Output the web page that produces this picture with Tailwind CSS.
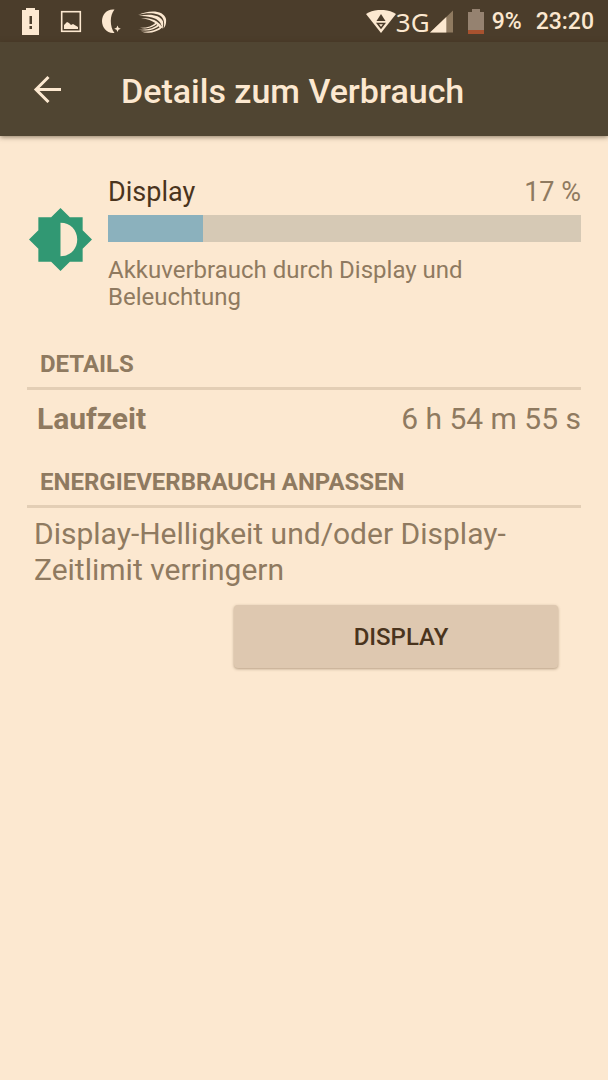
<!DOCTYPE html>
<html lang="de">
<head>
<meta charset="utf-8">
<meta name="viewport" content="width=device-width, initial-scale=1">
<title>Details zum Verbrauch</title>
<script src="https://cdn.jsdelivr.net/npm/@tailwindcss/browser@4"></script>
</head>
<body class="min-h-screen bg-[#fce8d0] font-[Roboto,sans-serif] text-[#8f7a60]">
<div class="flex h-[42px] items-center justify-between bg-[#4b3d2b] pl-5 pr-[14px] pt-px text-[#fce8d0]">
  <div class="flex items-center">
    <svg class="h-7 w-5" viewBox="0 0 20 28" fill="currentColor" aria-hidden="true"><path fill-rule="evenodd" d="M6 0h9v2h4v25H2V2h4zM9.500 8v8h2.500V8zM9.500 18v3h2.500v-3z"/></svg>
    <svg class="ml-5 h-6 w-[22px]" viewBox="0 0 22 24" aria-hidden="true"><rect x="1.7" y="1.700" width="18.6" height="19.600" fill="none" stroke="currentColor" stroke-width="1.6"/><path d="M4 19v-4l3-3 2 1 2 2 2-1 5 3v2z" fill="currentColor"/></svg>
    <svg class="ml-5 h-7 w-[19px]" viewBox="0 0 19 28" fill="currentColor" aria-hidden="true"><path d="M12.500 1.500C5 .5 0 6.500 0 13S5 26 12.500 25C10 22 8.800 17.500 8.800 13S10 4.500 12.500 1.500z"/><path d="M15.500 17.500l1 2.300 2.300 1-2.300 1-1 2.300-1-2.300-2.300-1 2.300-1z"/></svg>
    <svg class="ml-4 h-6 w-[30px]" viewBox="0 0 30 24" fill="currentColor" aria-hidden="true">
      <path d="M1 5C12-.500 27 0 29 9c.5 4-.500 7-2.500 9.500C28 12 27 7 21 4.500 15 2.500 8 3 1 5z"/>
      <path d="M2 6C13 3.500 23 5 26 11.500c.5 3 .2 5-.800 7.500C25 13 21 9 15 7.500 10 6 6 6 2 6z"/>
      <path d="M4 8c9-.500 17 2 21 9l-1.500 1.500C19 12 12 9 4 8z"/>
      <path d="M1 19.500c9 1 16-1 21-6l1.500 1.200C18 20 10 22 1 19.500z"/>
      <path d="M4 21.500c8 .8 15-.700 20.500-5.500l1 1.200C20 22.500 11 24 4 21.500z"/>
      <path d="M3 17.800c7 .3 12-1.500 16-5.300l1.500 1C16 17.500 10 19.500 3 17.800z"/>
    </svg>
  </div>
  <div class="flex items-center">
    <svg class="h-6 w-[30px]" viewBox="0 0 30 24" fill="currentColor" aria-hidden="true"><path d="M0 4C8-1.500 22-1.500 30 4L15 23z"/><path d="M10.500 11l4.500-7 4.500 7z" fill="#4a3b2a"/><path d="M11.500 13.500h7l-3.500 4.500z" fill="none" stroke="#4a3b2a" stroke-width="1.500"/></svg>
    <span class="font-['Noto_Sans',sans-serif] text-[26px] leading-7">3G</span>
    <svg class="h-6 w-[23px]" viewBox="0 0 24 24" aria-hidden="true"><path d="M24 0v23H0z" fill="#8f7a60"/><path d="M17 6.700V23H0z" fill="currentColor"/></svg>
    <svg class="ml-[14px] h-7 w-[18px]" viewBox="0 0 18 28" aria-hidden="true"><path d="M5 1h8v3h4v22H1V4h4z" fill="#958270"/><path d="M1 22h16v4H1z" fill="#a8522f"/></svg>
    <span class="ml-[7px] text-[23px] leading-7 font-medium">9%</span>
    <span class="ml-[14px] text-[23px] leading-7 font-medium">23:20</span>
  </div>
</div>
<header class="flex h-[94px] items-center bg-[#504532] pl-[33px] text-[#fce8d0] shadow-[0_1px_5px_rgba(60,45,25,0.6)]">
  <button type="button" aria-label="Zurück" class="flex size-7 items-center justify-center">
    <svg class="size-7" viewBox="0 0 28 28" fill="none" stroke="currentColor" stroke-width="3" aria-hidden="true"><path d="M28 14.500H3M15.500 2L3 14.500 15.500 27"/></svg>
  </button>
  <h1 class="ml-[60px] pt-1 text-[34px] leading-10 font-medium">Details zum Verbrauch</h1>
</header>
<main class="px-[27px] pt-10">
  <section class="flex items-start">
    <svg class="ml-[2px] mr-4 mt-8 size-[63px] shrink-0" viewBox="0 0 64 64" aria-hidden="true"><path fill="#319873" fill-rule="evenodd" d="M32 0l9.500 9.300h13v13.200L64 32l-9.500 9.500v13.200h-13L32 64l-9.500-9.300h-13V41.500L0 32l9.500-9.500V9.300h13zM32 15v34c10 0 17-7.500 17-17s-7-17-17-17z"/></svg>
    <div class="min-w-0 flex-1">
      <div class="flex justify-between text-[27px] leading-8"><h2 class="text-[#4a341d]">Display</h2><span>17 %</span></div>
      <div role="progressbar" aria-label="Display" aria-valuenow="17" aria-valuemin="0" aria-valuemax="100" class="mt-[7px] h-[27px] bg-[#d6c9b5]"><div class="h-full bg-[#8bb1bd]" style="width:20%"></div></div>
      <p class="mt-[15px] max-w-[400px] text-[24px] leading-[27px]">Akkuverbrauch durch Display und Beleuchtung</p>
    </div>
  </section>
  <section class="mt-[39px]">
    <h2 class="border-b-[3px] border-[#e3ceb5] pb-[9px] pl-[13px] text-[24px] leading-7 font-bold">DETAILS</h2>
    <dl class="mt-[11px] flex justify-between pl-[10px] text-[30px] leading-9"><dt class="font-bold">Laufzeit</dt><dd>6 h 54 m 55 s</dd></dl>
  </section>
  <section class="mt-[31px]">
    <h2 class="border-b-[3px] border-[#e3ceb5] pb-[9px] pl-[13px] text-[24px] leading-7 font-bold">ENERGIEVERBRAUCH ANPASSEN</h2>
    <p class="mt-2 pl-[7px] text-[30px] leading-9">Display-Helligkeit und/oder Display-Zeitlimit verringern</p>
    <div class="mt-[17px] flex pl-[207px] pr-[23px]">
      <button type="button" class="h-[63px] flex-1 rounded-[4px] bg-[#dec8b0] pl-[10px] text-[24px] leading-7 font-medium text-[#4a341d] shadow-[0_1px_3px_rgba(90,65,35,0.45)]">DISPLAY</button>
    </div>
  </section>
</main>
</body>
</html>
